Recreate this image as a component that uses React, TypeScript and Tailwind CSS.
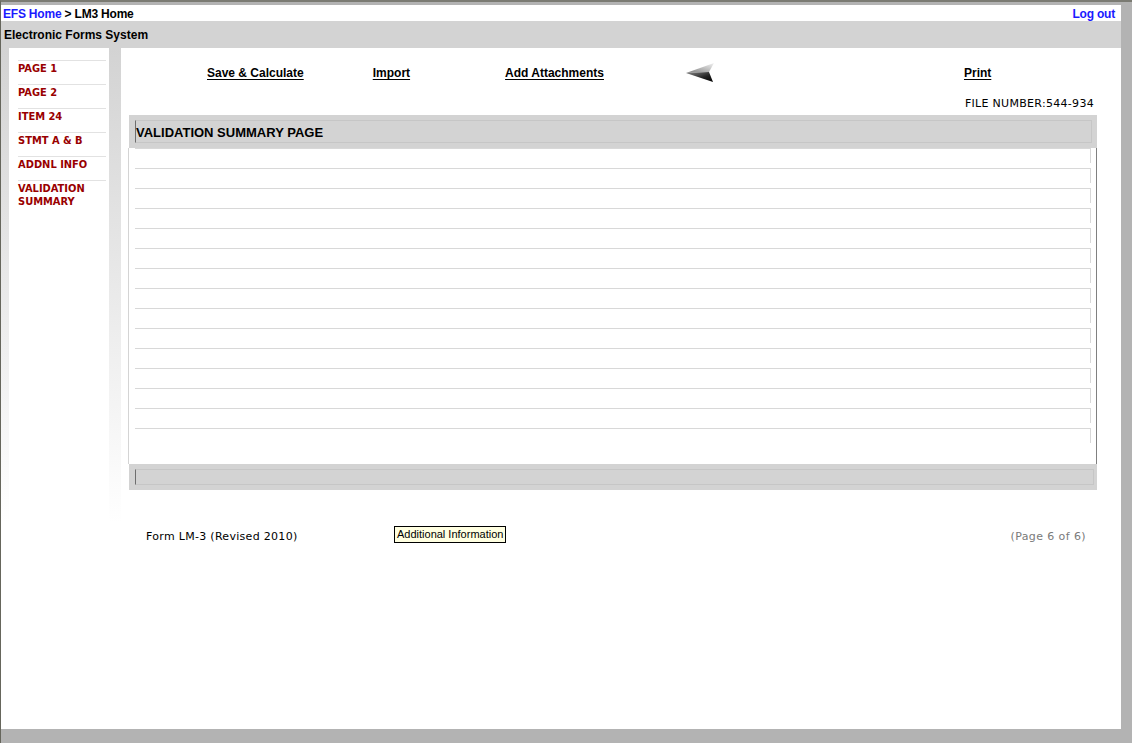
import React from 'react';

const navItems = ['PAGE 1', 'PAGE 2', 'ITEM 24', 'STMT A & B', 'ADDNL INFO', 'VALIDATION SUMMARY'];
const rows = Array.from({ length: 15 }, (_, i) => i);

function BackArrow() {
  return (
    <svg width="30" height="20" viewBox="0 0 30 20" className="block">
      <defs>
        <linearGradient id="arrTop" x1="0" y1="1" x2="1" y2="0">
          <stop offset="0" stopColor="#7a7a7a" />
          <stop offset="0.55" stopColor="#bdbdbd" />
          <stop offset="1" stopColor="#f2f2f2" />
        </linearGradient>
        <linearGradient id="arrBot" x1="0" y1="0" x2="1" y2="1">
          <stop offset="0" stopColor="#8a8a8a" />
          <stop offset="0.6" stopColor="#222222" />
          <stop offset="1" stopColor="#000000" />
        </linearGradient>
      </defs>
      <polygon points="0,10 28,0 23,9" fill="url(#arrTop)" />
      <polygon points="0,10 23,9 27,19" fill="url(#arrBot)" />
    </svg>
  );
}

export default function App() {
  return (
    <div className="w-[1132px] h-[743px] bg-[#b3b3b3] border-t-2 border-l border-t-[#7b7b73] border-l-[#66665c] pt-[3px] pr-[11px] pb-[14px] font-['Liberation_Sans',Arial,sans-serif] text-black">
      <div className="h-full bg-white flex flex-col">
        {/* breadcrumb */}
        <div className="h-[16px] flex items-center justify-between pl-[2px] pr-[6px] pt-[1px] text-[12px] font-bold leading-none tracking-[-0.2px]">
          <div>
            <span className="text-[#1a1aff]">EFS Home</span>
            <span> &gt; LM3 Home</span>
          </div>
          <span className="text-[#1a1aff]">Log out</span>
        </div>
        {/* title bar */}
        <div className="h-[27px] bg-[#d3d3d3] flex items-center pl-[3px] text-[12px] font-bold">
          Electronic Forms System
        </div>

        <div className="flex-1 flex bg-[linear-gradient(180deg,#d3d3d3_0px,#ffffff_475px)]">
          <div className="w-[8px]" />
          {/* side nav */}
          <div className="w-[100px] bg-white pt-[12px] pl-[9px] pr-[3px] font-['DejaVu_Sans_Condensed','DejaVu_Sans',Verdana,sans-serif]">
            {navItems.map((item) => (
              <div
                key={item}
                className="min-h-[24px] border-t border-[#e2e2e2] pt-[1px] pb-[2px] text-[11px] leading-[13px] font-bold text-[#990000]"
              >
                {item}
              </div>
            ))}
          </div>
          <div className="w-[12px]" />

          {/* main */}
          <div className="flex-1 bg-white flex flex-col">
            <div className="mt-[12px] h-[26px] flex items-center text-[12px] font-bold leading-[14px]">
              <span className="ml-[86px] underline underline-offset-2">Save &amp; Calculate</span>
              <span className="ml-[69px] underline underline-offset-2">Import</span>
              <span className="ml-[95px] underline underline-offset-2">Add Attachments</span>
              <span className="ml-[82px]">
                <BackArrow />
              </span>
              <span className="ml-[248px] underline underline-offset-2">Print</span>
            </div>

            <div className="mt-[11px] h-[14px] flex justify-end pr-[27px] text-[11px] leading-[14px] tracking-[0.3px] font-['DejaVu_Sans',Verdana,sans-serif]">
              FILE NUMBER:544-934
            </div>

            {/* validation box */}
            <div className="mt-[4px] ml-[8px] mr-[24px] flex flex-col">
              <div className="h-[33px] bg-[#d3d3d3] pt-[5px] pl-[6px] pr-[5px]">
                <div className="h-[23px] border border-[#c6c6c6] border-l-[#6e6e6e] pt-[3px] text-[13px] font-bold leading-[17px]">
                  VALIDATION SUMMARY PAGE
                </div>
              </div>
              <div className="h-[316px] -ml-[1px] border-l border-r border-l-[#d4d4d4] border-r-[#808080] pl-[6px] pr-[5px]">
                {rows.map((r) => (
                  <div key={r} className="h-[20px]">
                    <div className="h-[15px] border-t border-r border-[#d8d8d8]" />
                  </div>
                ))}
              </div>
              <div className="h-[26px] bg-[#d3d3d3] pt-[5px] pl-[6px] pr-[3px]">
                <div className="h-[16px] border border-[#c6c6c6] border-l-[#6e6e6e]" />
              </div>
            </div>

            {/* footer */}
            <div className="relative mt-[40px] h-[14px] flex justify-between items-center pl-[25px] pr-[35px] text-[11px] leading-[14px] font-['DejaVu_Sans',Verdana,sans-serif]">
              <span className="tracking-[0.3px]">Form LM-3 (Revised 2010)</span>
              <span className="text-[#7a7a7a] tracking-[0.4px]">(Page 6 of 6)</span>
              <div className="absolute left-[273px] top-[-4px] h-[17px] border border-black bg-[#ffffe1] px-[2px] text-[11px] leading-[15px] font-['Liberation_Sans_Narrow','Liberation_Sans',sans-serif] whitespace-nowrap">
                Additional Information
              </div>
            </div>
          </div>
        </div>
      </div>
    </div>
  );
}
